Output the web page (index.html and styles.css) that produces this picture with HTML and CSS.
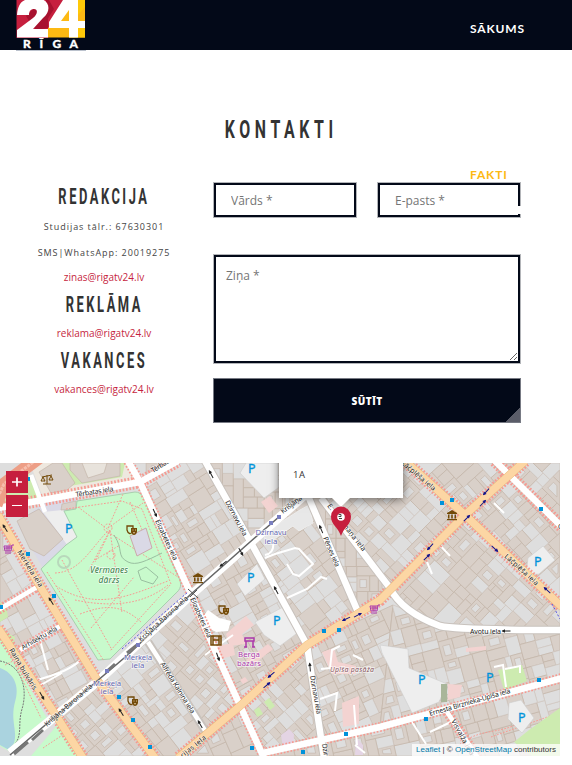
FILE: index.html
```html
<!DOCTYPE html>
<html lang="lv">
<head>
<meta charset="utf-8">
<title>Kontakti</title>
<link rel="stylesheet" href="styles.css">
</head>
<body>
<header class="header">
  <svg class="logo" width="70" height="51" viewBox="0 0 70 51">
    <path fill="#c61f3e" d="M0.500 0H53L32 38H.500z"/>
    <path fill="#a8122f" d="M10 16L18 8l14 0V28l-12 2-7-9zM30 0l3 0 5 9-7 11z"/>
    <path fill="#fdb913" d="M32 37.500V28L62 0h7v37.500z"/>
    <path fill="#ffc908" d="M53 37.500V28l9 9.500zM62 0h7v7l-7 8zM62 28h7v9.500h-7z"/>
    <path fill="#fff" d="M1 15C2 5 5 0 13-1h12c9 2 10 13 2 19L17 29h15v8.500H1V30l16-12c5-4 5-9 1-9-3 0-5 2-5 6z"/>
    <path fill="#fff" fill-rule="evenodd" d="M47 0h15v21h7v7h-7v9.500h-9V28H33v-6zM53 10l-8 11h8z"/>
    <g class="logo-text"><text x="7" y="48.300">R</text><text x="23.500" y="48.300">Ī</text><text x="36.500" y="48.300">G</text><text x="53.500" y="48.300">A</text></g>
    <path stroke="#bbc2cd" d="M0 50.5h70"/>
  </svg>
  <nav class="nav"><a class="nav-item">SĀKUMS</a><a class="nav-item active">FAKTI</a></nav>
</header>
<main>
  <h1><span>KONTAKTI</span></h1>
  <div class="contact">
    <section class="info">
      <h2><span>REDAKCIJA</span></h2>
      <p>Studijas tālr.: 67630301</p>
      <p>SMS|WhatsApp: 20019275</p>
      <a>zinas@rigatv24.lv</a>
      <h2><span>REKLĀMA</span></h2>
      <a>reklama@rigatv24.lv</a>
      <h2><span>VAKANCES</span></h2>
      <a>vakances@rigatv24.lv</a>
    </section>
    <form class="form">
      <input class="field" placeholder="Vārds *">
      <div class="email"><input class="field" placeholder="E-pasts *"></div>
      <textarea class="field message" placeholder="Ziņa *"></textarea>
      <button class="send" type="button">SŪTĪT</button>
    </form>
  </div>
  <div class="map">
    <svg width="560" height="293" viewBox="0 463 560 293">
      <defs>
        <g id="bus"><rect x="-2" y="-2" width="4" height="4" fill="#0092da"/></g>
        <g id="arrow"><path d="M-4.500 0h8" stroke="currentColor" stroke-width="1"/><path d="M4.500 0l-3.500-1.800v3.600z" fill="currentColor"/></g>
        <g id="museum" fill="#734a08"><path d="M-5-2L0-5l5 3v1H-5zM-4-.5h1.500v4H-4zM-.8-.5H.8v4H-.8zM2.500-.5H4v4H2.500zM-5 4H5v1.300H-5z"/></g>
        <g id="theatre"><path d="M-5-4h6v5c-2 4-5 3-6-1z" fill="none" stroke="#734a08" stroke-width="1.300"/><path d="M-1-2h6v4c-1 4-5 4-6 0z" fill="#734a08"/><path d="M.5 0h1M3 0h1M1 3q1-1 2 0" stroke="#f2dfbe" stroke-width=".8" fill="none"/></g>
        <g id="cart" fill="none" stroke="#ac39ac" stroke-width="1"><path d="M5-4H3L2 2h-6L-5-3H3M-4-1h6M-2-3v5M0-3v5M2 4h-6"/></g>
      </defs>
      <rect y="463" width="560" height="293" fill="#dedede"/>
      <g id="parcels"></g>

      <g stroke="#c4b6ab" stroke-width=".7">
        <path fill="#eee8df" stroke="none" d="M30 463H128l8 17-93 18z"/>
        <path fill="#cdebb0" stroke="none" d="M0 505l8-20 18-18 14 30zM60 463h65l-3 14-58 10-14-15z"/>
        <path fill="#d9d0c9" d="M39 472l14-9h9l13 20-8 7-16 3zM70 463h50v13l-38 7-12-13z"/>
        <path fill="#e8e3dc" d="M82 463h25l-3 10-16 5z"/>
        <path fill="#dad9e6" stroke="none" d="M17 524l30-24 30-5 3 50-37 23z"/>
        <path fill="#eee" stroke="none" d="M43 512l20-2 14 26-9 10-16-22z"/>
        <path fill="#d9d0c9" d="M17 521l22-12 24 30-19 17-14-7zM62 504l14-3v8l-15 1z"/>
      </g>
      <path fill="#c8facc" stroke="#a9cfae" d="M64 511l12-2 1-8 58-9c8 0 10 8 13 16l31 70c3 7 2 11-4 16l-65 65-12 1-57-91 25-24 11-8z"/>
      <path fill="#c8facc" d="M0 635l48 85-38 32-10-6zM31 756l27-32 20 32z"/>
      <path fill="#aad3df" d="M0 668c14 5 20 18 15 34-5 18 3 30-1 41l-5 7-9-5z"/>
      <path fill="none" stroke="#777" stroke-dasharray="2 1" d="M0 661c22 4 28 28 22 48-5 17 2 26-10 39"/>
      <g fill="none" stroke="#f79b93" stroke-width="1" stroke-dasharray="1.700 1.500">
        <path d="M78 507l32 24-15 31M108 528l15-34M108 528l35-25M110 530l-22 42M108 532l70 45M55 573c25-1 35-24 53-42M110 531l12 82M62 560l50 90M75 600c34 7 67 6 93-15M95 560l25-15M91 628l43-51M56 586c41 26 75 9 112-5M80 614c22-8 40-12 62 9M130 502l20 46M66 509l56-8 20 8 29 75-61 67M47 572l57 89"/>
        <circle cx="108" cy="528" r="4"/><circle cx="111" cy="555" r="4"/>
        <path d="M3 640l38 78M5 665l20-10M43 748l24-16M450 753c30-30 44-14 77-34M491 737l62-22"/>
      </g>
      <path fill="none" stroke="#99bfa0" d="M114 535c10 15 2 21 14 27 8 4 18-1 34-9M138 571l8-4 12 10-5 7-12-4z"/>
      <path fill="#dad9e6" stroke="#cbaaaa" d="M130 536l16-8 6 20-15 8z"/>
      <circle cx="64" cy="562" r="6" fill="none" stroke="#b8d8bb" stroke-width="2"/>

      <g fill="#eee" stroke="#ccc" stroke-width=".6">
        <path d="M246 463h32v25l-14 10-24-25z"/><path d="M237 584l20-20 8 15-20 17z"/>
        <path d="M380 645l28 4 1 19 38 16-8 18-27 11-30-60z"/><path d="M528 558l15-12 12 14-16 14-13 1z"/><path d="M509 703l12-3 13 18-12 15-14-14z"/><path d="M255 622l30-16 15 25-20 15-16-11z"/>
      </g>
      <path fill="#fff" d="M202 618l6-8 11 8 12 3-3 10-12 1-6-3z"/>
      <g fill="#f3d3d1"><path d="M226 634l20-18 8 9-12 9 4 10-16 2zM217 646l16-3 2 12-14 4zM246 660l22-16 5 5-20 16zM240 680l5-3 3 4-5 3z"/><path d="M261 502l9-6 8 10-9 7z"/><path d="M322 652l12-4 4 14 18 4v8h-24zM342 703l17-7v28l-16 3zM466 648l20-2v4l-20 2zM448 684l14 1-2 12-12 3z"/></g>
      <path fill="#e4d4e4" d="M281 735l8-6 5 5-1 16-10-2zM356 737l7 8v10h-8z"/>
      <path fill="#cdebb0" d="M498 670l24-5 5 16-23 9zM529 730l31-22v48h-28l-18-14zM0 622l8-5-2-12-6-3zM5 632l10 5-2 10zM264 702l5-4 6 8-5 4zM254 710l5-3 4 7-6 3z"/>
      <path fill="#a9b69a" d="M441 684h6v18h-6z"/>
      <path fill="#e8e8e8" stroke="#eee" d="M263 534l37-24 9-5 4 18-14 8-6-5-26 18z"/>
      <g fill="none" stroke="#fff" stroke-width="2">
        <path d="M265 558l10-4 20-6 4 1 14 15-14 12-6-2-6-10M287 598l20-9 14-12 6 2M265 555q10-2 8-14M30 682c30-8 44-14 55-26M40 640l8 30M32 690l30-17M205 655l28-20M321 669l9-1 2-18 8-4M353 655l10 5M320 699l17-6-2 18M354 705l3 40M355 745l10 8M494 667l9-2 3 22M505 669l15-3v7M412 722l14 22M430 732l25-12M494 503l10 10M435 540l15 16M427 562l5 12"/>
      </g>

      <g id="edges" fill="none" stroke="#f59a91" stroke-width="12.500" stroke-dasharray="1.700 1.700">
        <path d="M-2 508L43 500 140 482 178 461M-2 515L35 578 97 680 155 758M-2 628L57 717 83 758"/>
        <path d="M525 461L465 515 380 600 307 645 240 706 178 758M405 461L465 515 562 607M495 461L562 527"/>
        <path stroke-width="10" d="M128 461L140 482 190 592 217 655 264 758M-2 610L37 587M20 650L62 625M263 753L380 727 562 678M447 712L478 758"/>
      </g>
      <g fill="none" stroke="#c8c2bd" stroke-width="8.500">
        <path d="M205 461L250 541 307 645 324 758M308 496L358 612M321 498L390 588Q402 612 440 626Q457 630 562 630M148 642L206 732M10 753L57 715 97 682 190 596 250 543 345 460"/>
      </g>
      <g fill="none" stroke="#fff" stroke-width="6.500" stroke-linejoin="round">
        <path d="M-2 508L43 500 140 482 178 461M128 461L140 482 190 592 217 655 264 758M205 461L250 541 307 645 324 758M308 496L358 612M263 753L380 727 562 678"/>
        <path d="M495 461L562 527M321 498L390 588Q402 612 440 626Q457 630 562 630"/>
        <path stroke-width="9" d="M10 753L57 715 97 682 190 596 250 543 345 460"/>
        <path stroke-width="4.500" d="M-2 610L37 587M20 650L62 625M148 642L206 732M447 712L478 758M31 475L45 512"/>
      </g>
      <g fill="none" stroke="#e7b878" stroke-width="8.200"><path d="M-2 515L35 578 97 680 155 758M-2 628L57 717 83 758M525 461L465 515 380 600 307 645 240 706 178 758M405 461L465 515 562 607"/></g>
      <g fill="none" stroke="#fcd6a4" stroke-width="7.400"><path d="M-2 515L35 578 97 680 155 758M-2 628L57 717 83 758M525 461L465 515 380 600 307 645 240 706 178 758M405 461L465 515 562 607"/></g>
      <path fill="none" stroke="#ed9e86" stroke-width="13" d="M-4 505L4 484 40 457"/>
      <path fill="none" stroke="#f6bfae" stroke-width="3" stroke-dasharray="3 1" d="M-4 501L4 484 40 457"/>
      <path fill="none" stroke="#666" stroke-width="1.600" d="M10 755L130 653 190 595 250 542 280 516"/>
      <path fill="none" stroke="#777" stroke-width="3" d="M14 754L28 742M32 740L43 730M106 672L115 664M127 653L137 645"/>
      <path fill="none" stroke="#5553e0" stroke-dasharray="2 2" d="M122 649L188 592M552 604l8 15"/>
      <g fill="#7a7fc0"><rect x="105" y="669" width="4" height="4"/><rect x="136" y="643" width="4" height="4"/><rect x="269" y="521" width="4" height="4"/><rect x="277" y="515" width="4" height="4"/></g>

      <g class="street">
        <text transform="translate(76 497) rotate(-9)" textLength="38">Tērbatas iela</text>
        <text transform="translate(153 473) rotate(-32)" textLength="36">Tērbatas iela</text>
        <text transform="translate(155 521) rotate(65)" textLength="44">Elizabetes iela</text>
        <text transform="translate(190 599) rotate(66)" textLength="43">Elizabetes iela</text>
        <text transform="translate(17 552) rotate(58)" textLength="42">Merķeļa iela</text>
        <text transform="translate(9 650) rotate(59)" textLength="47">Raiņa bulvāris</text>
        <text transform="translate(23 650) rotate(-30)" textLength="40">Arhitektu iela</text>
        <text transform="translate(47 727) rotate(-41)" textLength="61">Krišjāņa Barona iela</text>
        <text transform="translate(141 642) rotate(-42)" textLength="64">Krišjāņa Barona iela</text>
        <text transform="translate(283 514) rotate(-38)" textLength="61">Krišjāņa Barona iela</text>
        <text transform="translate(160 664) rotate(58)" textLength="59">Alfrēda Kalniņa iela</text>
        <text transform="translate(225 502) rotate(62)" textLength="39">Dzirnavu iela</text>
        <text transform="translate(310 676) rotate(80)" textLength="39">Dzirnavu iela</text>
        <text transform="translate(322 744) rotate(81)" textLength="39">Dzirnavu iela</text>
        <text transform="translate(323 538) rotate(67)" textLength="32">Pērses iela</text>
        <text transform="translate(327 506) rotate(52)" textLength="58">E. Blaumaņa iela</text>
        <text transform="translate(401 464) rotate(40)" textLength="42">Lāčplēša iela</text>
        <text transform="translate(504 557) rotate(42)" textLength="43">Lāčplēša iela</text>
        <text transform="translate(470 634)" textLength="31">Avotu iela</text>
        <text transform="translate(430 716) rotate(-16)" textLength="84">Ernesta Birznieka-Upīša iela</text>
        <text transform="translate(451 721) rotate(61)" textLength="40">Visvalža iela</text>
        <text transform="translate(174 765) rotate(-39)" textLength="42">Marijas iela</text>
        <text x="558" y="529">G</text>
      </g>
      <g class="place green"><text x="109" y="573" textLength="38">Vērmanes</text><text x="109" y="583" textLength="21">dārzs</text></g>
      <g class="place stop"><text x="271" y="535" textLength="31">Dzirnavu</text><text x="271" y="544">iela</text><text x="138" y="660" textLength="28">Merķeļa</text><text x="138" y="668">iela</text><text x="107" y="686" textLength="28">Merķeļa</text><text x="107" y="694">iela</text></g>
      <g class="place shop"><text x="249" y="657">Berga</text><text x="249" y="666" textLength="24">bazārs</text></g>
      <text class="place yard" x="352" y="672" textLength="44">Upīša pasāža</text>

      <g class="parking"><text x="65" y="533">P</text><text x="248" y="473">P</text><text x="247" y="582">P</text><text x="273" y="625">P</text><text x="534" y="566">P</text><text x="418" y="684">P</text><text x="486" y="682">P</text><text x="518" y="722">P</text></g>
      <use href="#bus" x="28" y="479"/><use href="#bus" x="28" y="554"/><use href="#bus" x="54" y="596"/><use href="#bus" x="1" y="607"/><use href="#bus" x="119" y="697"/><use href="#bus" x="133" y="720"/><use href="#bus" x="150" y="747"/><use href="#bus" x="252" y="748"/><use href="#bus" x="303" y="752"/><use href="#bus" x="346" y="734"/><use href="#bus" x="324" y="631"/><use href="#bus" x="339" y="630"/><use href="#bus" x="442" y="503"/><use href="#bus" x="452" y="500"/><use href="#bus" x="541" y="509"/><use href="#bus" x="426" y="719"/><use href="#bus" x="539" y="680"/>
      <g color="#12128c"><use href="#arrow" transform="translate(486 492) rotate(133)"/><use href="#arrow" transform="translate(483 503) rotate(-46)"/><use href="#arrow" transform="translate(467 518) rotate(-45)"/><use href="#arrow" transform="translate(430 547) rotate(133)"/><use href="#arrow" transform="translate(427 557) rotate(-45)"/><use href="#arrow" transform="translate(495 549) rotate(42)"/><use href="#arrow" transform="translate(547 590) rotate(222)"/><use href="#arrow" transform="translate(346 619) rotate(155)"/><use href="#arrow" transform="translate(358 615) rotate(-28)"/><use href="#arrow" transform="translate(271 675) rotate(140)"/><use href="#arrow" transform="translate(267 685) rotate(-40)"/></g>
      <g color="#222"><use href="#arrow" transform="translate(5 528) rotate(238)"/><use href="#arrow" transform="translate(51 601) rotate(238)"/><use href="#arrow" transform="translate(155 513) rotate(65)"/><use href="#arrow" transform="translate(211 474) rotate(242)"/><use href="#arrow" transform="translate(321 529) rotate(247)"/><use href="#arrow" transform="translate(276 590) rotate(242)"/><use href="#arrow" transform="translate(241 552) rotate(60)"/><use href="#arrow" transform="translate(223 564) rotate(142)"/><use href="#arrow" transform="translate(42 696) rotate(60)"/><use href="#arrow" transform="translate(121 712) rotate(238)"/><use href="#arrow" transform="translate(218 657) rotate(70)"/><use href="#arrow" transform="translate(200 724) rotate(240)"/><use href="#arrow" transform="translate(310 667) rotate(265)"/><use href="#arrow" transform="translate(506 631) rotate(180)"/></g>
      <path d="M188 589l10 9M190 597l7-7" stroke="#555" fill="none"/>
      <use href="#museum" x="452" y="515"/><use href="#museum" x="198" y="578"/>
      <use href="#theatre" x="132" y="530"/><use href="#theatre" x="133" y="701"/><use href="#theatre" x="224" y="610"/>
      <use href="#cart" x="9" y="549"/><use href="#cart" x="375" y="609"/>
      <path d="M47 475v9M43 484h8M42 477l5-1 5-1M43 477l-2 4h4zM51 476l-2 4h4z" fill="none" stroke="#734a08"/>
      <path d="M211 636h10v9h-10zM213 636v9M219 636v9M213 640h6" fill="none" stroke="#734a08" stroke-width="1.500"/>
      <path d="M245 638h9v3h-9zM246 641v6M253 641v6M244 647h3M252 647h3" fill="none" stroke="#ac39ac" stroke-width="1.500"/>
    </svg>
    <div class="popup">1A</div>
    <svg class="pin" width="22" height="39" viewBox="0 0 22 39"><path fill="#fff" d="M2 0h18l-9 9z"/><path fill="#c61f3e" d="M11 38C8 29 1 27 1 18.500a10 10 0 0 1 20 0C21 27 14 29 11 38z"/><circle cx="11" cy="19" r="3.800" fill="#fff"/><path d="M8.500 16.500l2.500 0v2h-2.500M9 20.500h3" stroke="#444" fill="none"/></svg>
    <div class="zoom"><button aria-label="Pietuvināt"><svg width="12" height="12"><path d="M1 6h10M6 1.500v9" stroke="#fff" stroke-width="1.700"/></svg></button><button aria-label="Attālināt"><svg width="12" height="12"><path d="M1 5.500h10" stroke="#fff"/></svg></button></div>
    <div class="credit"><a>Leaflet</a> | © <a>OpenStreetMap</a> contributors</div>
  </div>
</main>
<script src="map.js"></script>
</body>
</html>
```
FILE: styles.css
```css
* { box-sizing: border-box; }
body { margin: 0; background: #fff; font-family: "Open Sans", sans-serif; color: #333; height: 765px; overflow: hidden; }
.header { height: 50px; background: #030918; display: flex; justify-content: space-between; padding: 0 30px 0 16px; }
.logo { display: block; flex: none; }
.logo-text { font: 900 12px Lato, sans-serif; fill: #fff; stroke: #fff; stroke-width: .3px; }
.nav { display: flex; flex-direction: column; width: 72px; height: 50px; z-index: 2; }
.nav-item { flex: none; height: 146px; padding-top: 20px; font: 700 12px/18px Lato, sans-serif; letter-spacing: .85px; color: #fff; }
.nav-item.active { color: #fdb913; }
h1, h2 { margin: 0; text-align: center; font-family: Roboto, sans-serif; font-weight: 700; color: #333; white-space: nowrap; }
h1 span, h2 span { display: inline-block; transform: scaleX(.6); }
h1 { font-size: 26.500px; line-height: 40px; letter-spacing: 7.700px; padding: 59px 10px 0 0; }
h2 { font-size: 21.500px; line-height: 34px; letter-spacing: 4.200px; margin: 0 -20px; }
.contact { display: grid; grid-template-columns: 208px 306px; column-gap: 6px; height: 314px; }
.info { padding-top: 31px; text-align: center; }
.info p { margin: 0; font-size: 9px; line-height: 26px; letter-spacing: .95px; color: #444; }
.info a { display: block; font-size: 10px; line-height: 22px; color: #c61f3e; }
.form { display: grid; grid-template-columns: 142px 142px; grid-template-rows: 36px 110px 45px; justify-content: space-between; padding-top: 34px; }
.field { display: block; width: 100%; border: 2px solid #030918; outline: none; box-shadow: 0 0 0 1px rgba(3,9,24,.3); background: #fff; font: 12px "Open Sans", sans-serif; padding: 0 15px; height: 34px; border-radius: 0; }
.field::placeholder { color: #757575; opacity: 1; }
.email { position: relative; }
.email::after { content: ""; position: absolute; right: -1px; top: 23px; width: 3px; height: 8px; background: #fff; }
.message { grid-column: 1 / 3; margin-top: 36px; height: 108px; padding: 10px 10px; }
.send { grid-column: 1 / 3; height: 45px; margin: 49px -1px 0; border: 1px solid #777a84; border-radius: 0; background: linear-gradient(135deg, transparent calc(100% - 10px), #5a5c68 calc(100% - 10px)) #030918; color: #fff; font: 800 10px "Open Sans", sans-serif; letter-spacing: .5px; }
.map { position: relative; width: 560px; height: 293px; overflow: hidden; }
.map > svg { display: block; }
.street { font: 7px "Noto Sans", sans-serif; fill: #222; stroke: #fff; stroke-width: 1.200px; stroke-opacity: .65; paint-order: stroke; }
.place { font: 8.500px "Noto Sans", sans-serif; text-anchor: middle; stroke: #fff; stroke-width: 1.500px; stroke-opacity: .7; paint-order: stroke; }
.green { fill: #347a44; font-style: italic; font-size: 8.500px; }
.stop { fill: #6669b4; font-size: 7.800px; }
.shop { fill: #ac39ac; font-size: 7.800px; }
.yard { fill: #85545d; font-size: 7px; font-style: italic; }
.parking { font: 12.500px "Noto Sans", sans-serif; fill: #0092da; stroke: #0092da; stroke-width: .3px; }
.popup { position: absolute; left: 279px; top: -30px; width: 124px; height: 65px; padding: 35px 0 0 14px; background: #fff; box-shadow: 0 2px 9px rgba(0,0,0,.5); font-size: 9.500px; line-height: 14px; letter-spacing: .5px; }
.map > .pin { position: absolute; left: 330px; top: 35px; }
.zoom { position: absolute; left: 6px; top: 8px; display: grid; gap: 2px; }
.zoom button { width: 22px; height: 22px; padding: 0; border: 0; background: #c61f3e; display: grid; place-items: center; }
.credit { position: absolute; right: 0; bottom: 0; padding: 0 4px; height: 12px; background: rgba(255,255,255,.75); font: 8.050px/12px "Liberation Sans", sans-serif; white-space: nowrap; }
.credit a { color: #0078a8; }
```
FILE: map.js
```js
const blocks = [
  [[0,520],[35,580],[0,605]], [[0,610],[37,590],[95,678],[57,715],[0,625]],
  [[57,718],[97,682],[150,756],[80,756]], [[97,682],[148,642],[205,730],[178,756],[153,756]],
  [[148,642],[190,597],[240,708],[205,730]], [[140,482],[170,463],[207,463],[250,542],[190,595]], [[128,463],[178,463],[140,482]],
  [[250,543],[307,645],[240,706],[190,597]], [[207,463],[345,463],[250,540]],
  [[250,543],[308,498],[358,612],[307,645]], [[308,498],[322,498],[395,590],[358,612]],
  [[465,515],[390,590],[322,498],[345,463],[405,463]], [[523,463],[465,515],[405,463]],
  [[465,515],[523,463],[560,525],[560,605]], [[497,463],[560,525],[560,463]],
  [[465,515],[560,605],[560,630],[457,629],[410,615],[390,590]],
  [[307,645],[393,605],[380,727],[318,742]], [[560,678],[380,727],[393,605],[457,629],[560,630]],
  [[240,706],[307,645],[318,742],[262,753]], [[240,706],[262,756],[190,756]],
  [[380,727],[447,712],[477,756],[262,756]], [[447,712],[560,680],[560,756],[477,756]]
];
let seed = 41;
const rnd = () => (seed = (seed * 16807) % 2147483647) / 2147483647;
const area = p => Math.abs(p.reduce((s, a, i) => { const b = p[(i + 1) % p.length]; return s + a[0] * b[1] - b[0] * a[1]; }, 0)) / 2;

// Keeps the part of a polygon on one side of the line n·p = d.
function clip(p, n, d, sign) {
  const out = [];
  p.forEach((a, i) => {
    const b = p[(i + 1) % p.length];
    const da = sign * (a[0] * n[0] + a[1] * n[1] - d), db = sign * (b[0] * n[0] + b[1] * n[1] - d);
    if (da >= 0) out.push(a);
    if (da * db < 0) { const t = da / (da - db); out.push([a[0] + t * (b[0] - a[0]), a[1] + t * (b[1] - a[1])]); }
  });
  return out;
}
const range = (p, n) => { const v = p.map(a => a[0] * n[0] + a[1] * n[1]); return [Math.min(...v), Math.max(...v)]; };
let html = '';
function split(p, u, v) {
  if (p.length < 3) return;
  const ar = area(p);
  if (ar < 90 + rnd() * 330) {
    const yard = rnd() < .28;
    html += `<polygon points="${p.map(a => a.map(c => c.toFixed(1)).join()).join(' ')}" fill="${yard ? '#dedede' : '#d9d0c9'}" stroke="${yard ? '#d0c6be' : '#c3b4a8'}" stroke-width=".7"/>`;
    if (!yard && ar > 150 && rnd() < .6) {
      const c = p.reduce((s, a) => [s[0] + a[0] / p.length, s[1] + a[1] / p.length], [0, 0]);
      html += `<polygon points="${p.map(a => a.map((k, i) => (c[i] + (k - c[i]) * .5).toFixed(1)).join()).join(' ')}" fill="#dedede" stroke="#c3b4a8" stroke-width=".6"/>`;
    }
    return;
  }
  const ru = range(p, u), rv = range(p, v), n = ru[1] - ru[0] > rv[1] - rv[0] ? u : v, r = n === u ? ru : rv;
  const d = r[0] + (r[1] - r[0]) * (.3 + rnd() * .4);
  split(clip(p, n, d, 1), u, v);
  split(clip(p, n, d, -1), u, v);
}
blocks.forEach(p => {
  const [a, b] = p, l = Math.hypot(b[0] - a[0], b[1] - a[1]), u = [(b[0] - a[0]) / l, (b[1] - a[1]) / l];
  split(p, u, [-u[1], u[0]]);
});
document.getElementById('parcels').innerHTML = html;
```
